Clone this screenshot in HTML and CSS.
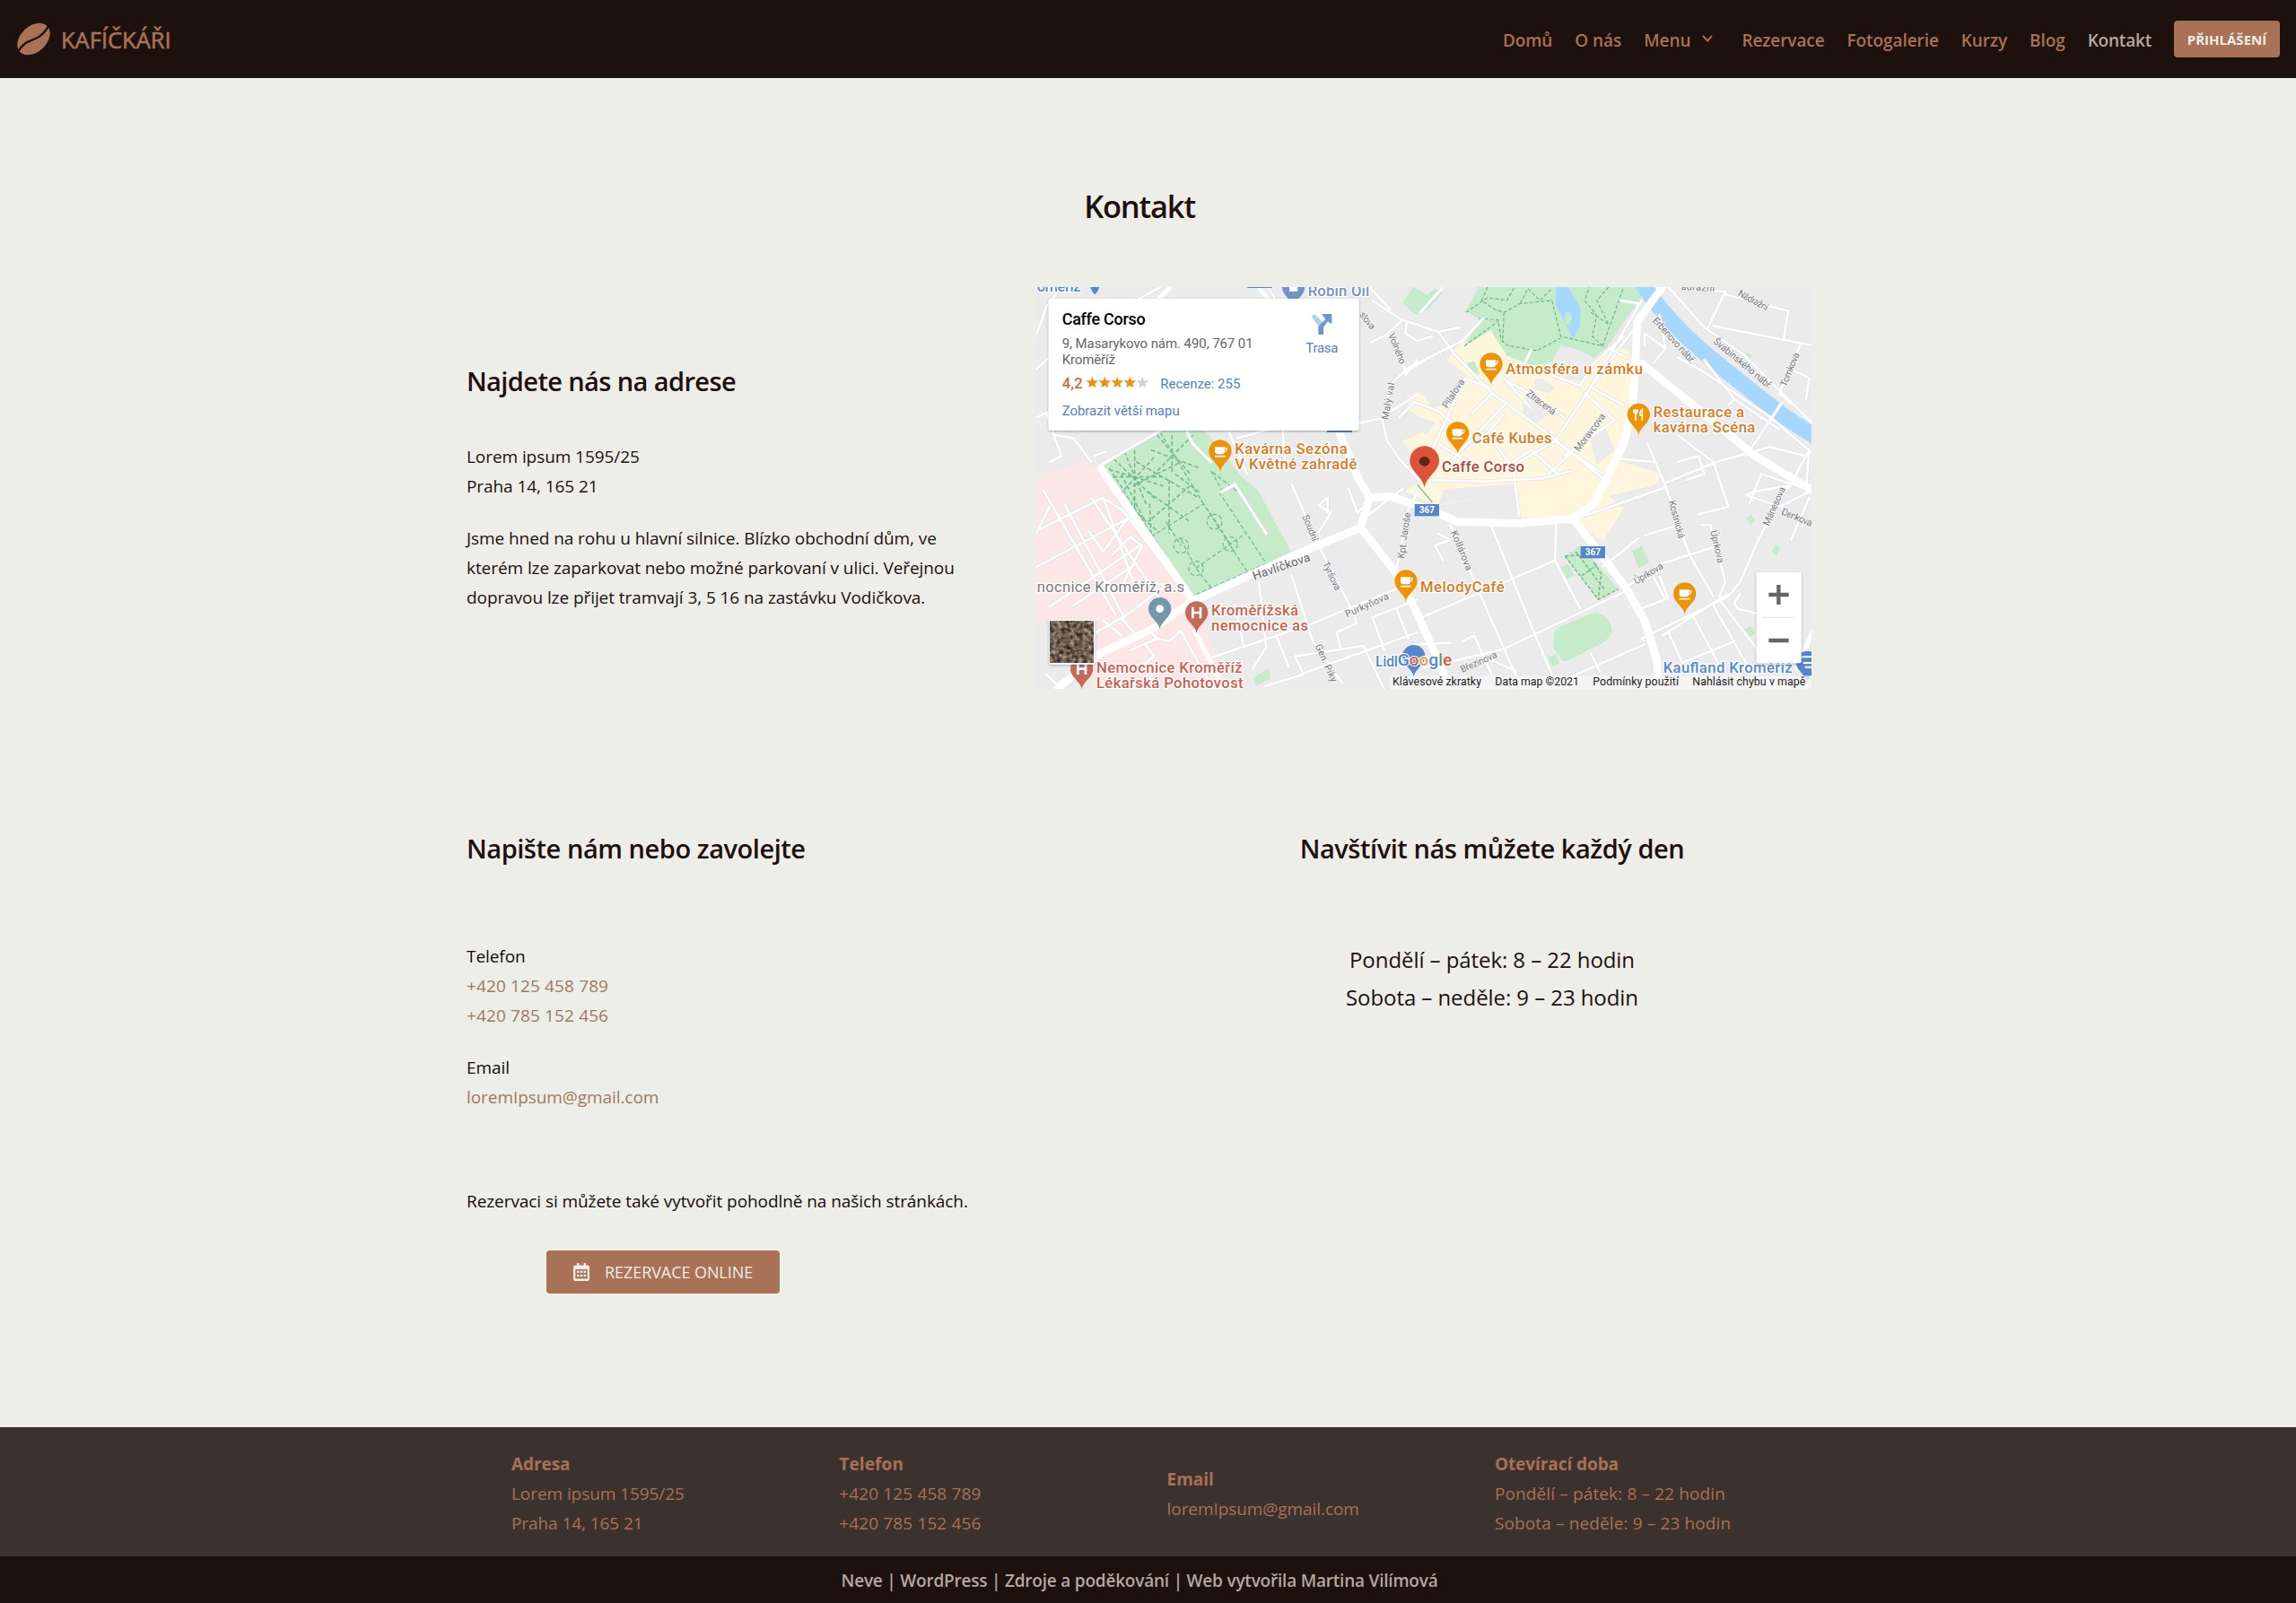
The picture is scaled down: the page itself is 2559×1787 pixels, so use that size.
FILE: index.html
```html
<!DOCTYPE html>
<html lang="cs">
<head>
<meta charset="utf-8">
<title>Kontakt – Kafíčkáři</title>
<link rel="stylesheet" href="styles.css">
</head>
<body>
<header class="header">
  <a class="brand">
    <svg class="brand-icon" viewBox="0 0 38 38"><ellipse cx="19" cy="19" rx="21.5" ry="14.8" transform="rotate(-43 19 19)" fill="#a97155"/><path d="M1 34C7 23 13 22 20 19C28 15.500 33 11 37 2" fill="none" stroke="#1c110d" stroke-width="2.400"/></svg>
    <span class="brand-name">KAFÍČKÁŘI</span>
  </a>
  <nav class="nav">
    <a>Domů</a><a>O nás</a>
    <a class="has-menu">Menu<svg class="chevron" viewBox="0 0 12 8"><path d="M1 1L6 6.500L11 1" fill="none" stroke="#a97155" stroke-width="1.900"/></svg></a>
    <a>Rezervace</a><a>Fotogalerie</a><a>Kurzy</a><a>Blog</a><a class="active">Kontakt</a>
    <a class="login">PŘIHLÁŠENÍ</a>
  </nav>
</header>

<main class="main">
  <h1 class="title">Kontakt</h1>
  <section class="place">
    <div class="place-text">
      <h2>Najdete nás na adrese</h2>
      <p>Lorem ipsum 1595/25<br>Praha 14, 165 21</p>
      <p>Jsme hned na rohu u hlavní silnice. Blízko obchodní dům, ve<br>kterém lze zaparkovat nebo možné parkovaní v ulici. Veřejnou<br>dopravou lze přijet tramvají 3, 5 16 na zastávku Vodičkova.</p>
    </div>
    <svg class="map" viewBox="16 15 2592 1344" preserveAspectRatio="none">
      <defs>
        <path id="drop" d="M0 68C-4 42-38 28-38 0A38 38 0 1 1 38 0C38 28 4 42 0 68Z"/>
        <g id="cafe"><use href="#drop" fill="#ef9206"/><path d="M-18-14H15V0Q15 10 5 10H-8Q-18 10-18 0Z" fill="#fff"/><path d="M14-10h7q3 9-9 12" fill="none" stroke="#fff" stroke-width="4"/><path d="M-18 17H17" stroke="#fff" stroke-width="5"/></g>
        <g id="hosp"><use href="#drop" fill="#c56a58"/><path d="M-13-19V19M13-19V19M-13 0H13" stroke="#fff" stroke-width="8" fill="none"/></g>
        <path id="star" d="M0-20L5-6L20-6L9 4L12 18L0 10L-12 18L-9 4L-20-6L-5-6Z"/>
        <filter id="ground" x="0" y="0" width="1" height="1" color-interpolation-filters="sRGB"><feTurbulence type="fractalNoise" baseFrequency=".07" numOctaves="4" seed="6"/><feColorMatrix values=".9 .3 0 0 -.17 .8 .3 0 0 -.18 .7 .3 0 0 -.18 0 0 0 0 1"/></filter>
        <filter id="shade" x="-.1" y="-.1" width="1.200" height="1.250"><feDropShadow dx="0" dy="3" stdDeviation="5" flood-opacity=".3"/></filter>
      </defs>
      <rect width="2640" height="1400" fill="#ebebec"/>

      <!-- districts, parks and water -->
      <path fill="#fde6e6" d="M0 652L185 596L238 640L550 1070L660 1360H200L215 1230V1140L18 1130Z"/>
      <path fill="#c5ebc8" d="M235 615L430 495H580L700 645L760 700L868 900L535 1058Z"/>
      <path fill="#c5ebc8" d="M1240 70L1275 15L1330 45L1290 110ZM740 1322L795 1290L800 1325L750 1350Z"/>
      <path fill="#fff6dd" d="M1255 385L1290 365L1320 385L1360 470L1300 450L1262 430ZM1240 530L1310 500L1360 560L1300 600Z"/>
      <g transform="translate(1290 0)">
        <path fill="#fff6dd" d="M140 205L245 160L315 240L400 300L545 330L640 215L705 225L720 300L700 480L655 590L815 640L800 675L640 715L690 755L620 865L540 810L340 785L325 705L70 745L-40 700L10 660L-10 560L60 470L10 430L90 410L165 310L100 260Z"/>
        <path fill="#ebebec" d="M350 390L395 370L440 440L400 470L355 450ZM580 530L625 480L660 560L600 610ZM390 325L420 320L460 350L440 370L395 360ZM90 690L325 675V712L210 722L70 742Z"/>
        <path fill="#c5ebc8" d="M205 15H775L720 90L635 215L590 252L540 225L480 210L450 265L385 278L300 245L245 160L158 212L205 120L162 95ZM165 270L190 262L210 310L165 290ZM10 60L60 20L85 35L30 95ZM1090 235L1120 240L1110 258L1085 250Z"/>
        <path fill="#a6d8ff" d="M465 15H505L545 85V145L520 188L492 130L462 75Z"/>
        <ellipse cx="504" cy="120" rx="12" ry="22" fill="#c5ebc8"/>
        <path fill="none" stroke="#68b586" stroke-width="3.500" stroke-dasharray="12 7" d="M235 15L215 60L260 90L290 100L345 70L450 60L480 180L620 212L690 15M205 120L270 125L280 190L300 210L400 228L480 185M162 100L235 50L300 60L325 15M620 212L585 180L600 110L560 60L575 15M580 100L640 140L600 60L640 15M290 100L285 200M158 212L270 130M345 70L370 20L410 60L450 20"/>
        <path fill="none" stroke="#a6d8ff" stroke-width="54" d="M750 0C830 125 925 210 1060 317S1230 455 1340 520"/>
      </g>
      <g transform="translate(1290 675)">
        <path fill="#c5ebc8" d="M494 240L545 203L672 350L605 385ZM718 222L750 206L775 260L740 280ZM480 275L505 268L524 305L500 318ZM455 505Q460 485 480 475L590 430Q645 435 650 490Q645 515 620 530L500 590Q480 595 475 575L455 545ZM440 580L465 565L475 600L450 610ZM1100 115L1115 102L1130 118L1115 135ZM1185 225L1198 203L1215 210L1200 238ZM1092 488L1115 475L1130 500L1105 514Z"/>
        <path fill="none" stroke="#68b586" stroke-width="4" stroke-dasharray="12 6" d="M494 240L605 385L672 350M530 225L625 350M550 305L600 270M590 260L615 300L605 380M494 240L560 235"/>
      </g>

      <!-- garden paths -->
      <g fill="none" stroke="#74bc90" stroke-width="4" stroke-dasharray="14 8">
        <path d="M260 620L535 1050L785 940L630 705M400 850L575 740L720 965M575 740L430 500M500 860L550 955L600 1020M550 955L665 875L715 840M665 875L610 790L575 740M450 800L500 880M640 700L600 630L690 700"/>
        <circle cx="665" cy="875" r="24"/><circle cx="550" cy="956" r="24"/><circle cx="500" cy="880" r="25"/><circle cx="612" cy="800" r="25"/>
        <path stroke-width="5" d="M345 560V750M250 650H450M275 590L420 730M410 585L285 720M310 565L385 745M260 625L440 680M470 510V640M400 560L560 620M420 510L530 640M540 510L410 640M390 700L530 800M530 680L390 800M460 660V840M340 760L420 830M300 640L380 800M350 600L560 720M340 680L500 600M480 640L560 700M395 740L400 850"/>
      </g>

      <!-- side streets: a grey edge below, white on top -->
      <g class="street-edge">
        <path id="net" d="M15 290L60 250M15 180L50 80L100 15M20 450L100 410L50 440L100 580L60 600M80 510L140 520L200 600M225 615L430 495M210 580L250 565M520 500L540 540L600 600M660 500L720 640M840 495L850 630M690 520L800 490M350 60L440 10M790 15L830 80M1095 470L1175 452M1290 375L1170 450L1190 530L1230 590L1300 665M1250 295L1200 340L1180 450M1140 60L1200 100L1240 125L1290 140L1340 160M1240 125L1185 175L1135 200M1185 175L1220 200L1250 300L1330 250L1400 215M1130 15L1200 90M1255 130L1250 170L1290 195L1340 180M1290 260L1250 310
          M40 695L280 1110M18 830L240 720L300 760M18 950L320 790M60 1085L360 880M60 750L15 840M140 1080L350 940M240 720L340 1000L440 1010M110 740L310 1120M200 720L430 1060M300 755L530 1060M190 830L240 900L320 790M270 910L330 850L370 880L300 1020M215 1170L320 1110L440 1020M240 1130L300 1180M300 1120L350 1180M330 1230L420 1190L460 1200L500 1165L540 1240L610 1360M380 1210L410 1250L370 1280M420 1190L390 1160M50 1310L90 1350
          M635 700L680 675L785 840M870 675L960 880L1080 1110L1085 1140L1020 1170L1035 1225M870 980L940 1200L1040 1340M960 835L985 795L1000 770L960 745L990 720L990 770M760 1000L785 1220L740 1290M680 1075L710 1220M820 1185L860 1285M600 1255L940 1140L1230 1020M880 1250L1110 1215L1160 1320L1180 1360M880 1250L910 1310L780 1350M900 1310L1290 1170M1060 690L1090 770L1110 750M1110 790L1240 690M1140 1120L1290 1060M1140 1120L1180 1230M1220 1090L1260 1190M1290 700L1260 760L1220 960"/>
        <g id="net-east" transform="translate(1290 0)">
          <path d="M0 140L70 165L125 240L250 370L430 500L620 655M-40 290L150 195L220 120M70 165L140 150M240 350L160 320L40 580L20 660L220 665L420 655L515 630M165 560L240 500L290 440M300 330L350 355L490 450M290 320L380 420M180 440L250 370M70 540L190 610M110 600L300 400M230 500L320 620L340 780M340 600L460 530L580 350L750 60M580 350L690 410M560 370L660 460L490 580M460 530L620 640M320 600L380 560L470 640M515 570L440 640M640 220L700 250M680 60L740 70M720 160L580 350M450 310L545 345L590 270L690 180M380 225L360 270M100 0L10 100M810 110L830 220L790 270M830 220L760 170L760 210M840 15L960 150L1090 240L1250 400L1320 470M970 155L1030 30L880 20M1030 40L1240 95L1225 190M990 145L1320 210M1280 210L1210 370L1250 405M1250 290L1310 320L1300 390M960 260L1060 390L1210 490M870 250L960 300L1180 450L1320 570M1060 390L1040 410M790 600L680 590M770 540L830 680M830 670L1000 600L1180 550L1300 580M870 510L990 600L1040 750L940 775M870 600L940 580L960 640L900 660M1220 400L1100 580M1110 740L1150 640L1300 690L1310 560L1240 690M-60 450L-10 400L70 430L130 480"/>
          <path d="M1240 680L1120 700L1100 710L1210 750L1310 700M560 780L830 685M620 950L740 855M760 845L860 815M830 680L910 910L990 1050M910 910L820 940L710 1010M910 910L1010 880M950 810L980 810L1030 1000L1010 1050M1240 680L1140 860L1080 1000L1040 1050L750 1190L760 1200M790 985L830 1060L750 1090M810 980L840 1060M465 800L460 930L15 1120M460 930L545 1090M250 820L390 1170L450 1310M110 810L200 1020L350 1360M20 1290L290 1225L700 1030M70 840L110 860L60 880L85 930M-10 1210L110 1205M150 1200L190 1180L270 1360M330 1300L220 1250M420 1360L760 1210M840 1170L890 1280M920 1110L1020 1300M990 1080L1120 1310M1010 1060L1170 1270M1080 1040L1060 1070L1070 1090L1150 1110M890 1270L1060 1200M820 1180L1040 1040M1250 860L1310 720M580 1240L610 1300"/>
        </g>
      </g>
      <g class="street"><use href="#net"/><use href="#net-east"/></g>
      <g class="road">
        <path d="M235 625L540 1065M540 1065L760 965L930 890L1100 820L1130 720L1090 650L1025 490M90 1355L230 1240L400 1160L540 1065M1130 720L1200 715L1360 770L1420 800L1630 805L1810 790L1880 740L1980 540L2010 420L2020 250L2025 130L2110 15M1100 820L1230 985L1300 1130L1380 1310M1810 790L1890 890L1990 1025L2050 1130L2090 1260L2100 1360M2040 270L2200 400L2420 580L2620 700"/>
        <path class="thin" d="M400 80L460 20M545 1165L610 1290L640 1360M760 15L810 80M2560 1290L2610 1170"/>
      </g>

      <!-- street names -->
      <g class="street-name">
        <text transform="translate(1095 108) rotate(52)" textLength="65">slova</text>
        <text transform="translate(1192 175) rotate(68)" textLength="108">Volného</text>
        <text transform="translate(1192 460) rotate(-80)" textLength="125">Malý val</text>
        <text transform="translate(1390 422) rotate(-57)" textLength="108">Pilařova</text>
        <text transform="translate(1652 375) rotate(37)" textLength="115">Ztracená</text>
        <text transform="translate(1830 567) rotate(-53)" textLength="150">Moravcova</text>
        <text transform="translate(2075 128) rotate(48)" textLength="195">Erbenovo nábř.</text>
        <text transform="translate(2278 200) rotate(40)" textLength="245">Švabinského nábř.</text>
        <text transform="translate(2172 24) rotate(3)" textLength="112">ádražní</text>
        <text transform="translate(2360 42) rotate(29)" textLength="110">Nádražní</text>
        <text transform="translate(2523 350) rotate(-68)" textLength="120">Tomkova</text>
        <text transform="translate(905 782) rotate(68)" textLength="92">Soudní</text>
        <text transform="translate(972 940) rotate(64)" textLength="102">Tyršova</text>
        <text transform="translate(948 1215) rotate(66)" textLength="135">Gen. Píky</text>
        <text transform="translate(1055 1120) rotate(-24)" textLength="155">Purkyňova</text>
        <text transform="translate(1246 924) rotate(-82)" textLength="155">Kpt. Jaroše</text>
        <text transform="translate(1402 835) rotate(68)" textLength="140">Kollárova</text>
        <text transform="translate(1440 1305) rotate(-24)" textLength="130">Březinova</text>
        <text transform="translate(2130 732) rotate(75)" textLength="130">Kostnická</text>
        <text transform="translate(2270 832) rotate(77)" textLength="110">Úprkova</text>
        <text transform="translate(2022 1010) rotate(-31)" textLength="108">Úprkova</text>
        <text transform="translate(2465 815) rotate(-66)" textLength="138">Mánesova</text>
        <text transform="translate(2505 775) rotate(22)" textLength="108">Denkova</text>
        <text class="main-name" transform="translate(745 995) rotate(-19)" textLength="200">Havlíčkova</text>
      </g>
      <g class="shield"><rect x="722" y="5" width="82" height="13"/><rect x="988" y="480" width="84" height="21"/><rect x="1281" y="741" width="82" height="40"/><text x="1322" y="772">367</text><rect x="1836" y="882" width="82" height="40"/><text x="1877" y="913">367</text></g>

      <!-- places -->
      <use href="#cafe" x="631" y="564"/><use href="#cafe" x="1537" y="273"/><use href="#cafe" x="1425" y="504"/><use href="#cafe" x="1252" y="999"/><use href="#cafe" x="2184" y="1041"/>
      <g transform="translate(2030 442)"><use href="#drop" fill="#ef9206"/><path d="M-16-18V-8Q-10 2-4-8V-18M-10-18V20M12 20V-18Q2-10 6 2H12" fill="none" stroke="#fff" stroke-width="5"/></g>
      <g class="poi orange">
        <text x="680" y="572" textLength="376">Kavárna Sezóna</text><text x="680" y="625" textLength="408">V Květné zahradě</text>
        <text x="1586" y="307" textLength="458">Atmosféra u zámku</text><text x="1473" y="537" textLength="267">Café Kubes</text>
        <text x="2079" y="450" textLength="304">Restaurace a</text><text x="2079" y="502" textLength="341">kavárna Scéna</text>
        <text x="1300" y="1034" textLength="281">MelodyCafé</text>
      </g>
      <use href="#hosp" x="552" y="1104"/><use href="#hosp" x="168" y="1292"/>
      <g class="poi red">
        <text x="601" y="1112" textLength="291">Kroměřížská</text><text x="601" y="1165" textLength="324">nemocnice as</text>
        <text x="217" y="1304" textLength="488">Nemocnice Kroměříž</text><text x="217" y="1357" textLength="491">Lékařská Pohotovost</text>
      </g>
      <use href="#drop" fill="#7696ab" x="429" y="1091"/><circle cx="429" cy="1091" r="13" fill="#fff"/>
      <text class="poi grey" x="18" y="1035" textLength="493">nocnice Kroměříž, a.s</text>
      <path d="M1290 675L1340 735" stroke="#7cc196" stroke-width="4"/>
      <path d="M1314 687C1310 650 1265 630 1265 596A49 49 0 0 1 1363 596C1363 630 1318 650 1314 687Z" fill="#de5237"/><ellipse cx="1314" cy="598" rx="18" ry="16" fill="#59281a"/>
      <text class="poi corso" x="1372" y="632" textLength="276">Caffe Corso</text>
      <g class="poi blue">
        <text x="18" y="31" textLength="147">oměříž</text><path d="M194 5Q200 32 213 40Q226 25 230 5Z"/>
        <use href="#drop" x="876" y="16" class="slate"/><path d="M862 8H890V30H862Z" class="white"/>
        <text x="924" y="46" textLength="206" class="slate">Robin Oil</text>
        <use href="#drop" x="1278" y="1250"/>
        <text x="1150" y="1284" textLength="75">Lidl</text>
        <text x="2112" y="1304" textLength="432">Kaufland Kroměříž</text><use href="#drop" x="2594" y="1270"/><path d="M2576 1252H2610M2580 1272H2610M2586 1286H2610" stroke="#fff" stroke-width="6"/>
      </g>
      <text class="google" x="1224" y="1282" textLength="182" lengthAdjust="spacingAndGlyphs"><tspan fill="#4b86e0">G</tspan><tspan fill="#d9553f">o</tspan><tspan fill="#e8a33d">o</tspan><tspan fill="#4b86e0">g</tspan><tspan fill="#5aa567">l</tspan><tspan fill="#d9553f">e</tspan></text>

      <!-- controls -->
      <g filter="url(#shade)"><rect x="58" y="1127" width="154" height="150" rx="5" fill="#fff"/></g>
      <rect x="63" y="1132" width="144" height="140" filter="url(#ground)"/>
      <g filter="url(#shade)"><rect x="2424" y="969" width="150" height="304" rx="6" fill="#fff"/></g>
      <path d="M2465 1044H2532M2498 1011V1077M2465 1197H2532" stroke="#666" stroke-width="13"/><path d="M2443 1120H2552" stroke="#e2e2e2" stroke-width="3"/>
      <rect x="1198" y="1315" width="1412" height="45" fill="#f5f5f5" opacity=".82"/>
      <g class="legal"><text x="1207" y="1347" textLength="297">Klávesové zkratky</text><text x="1550" y="1347" textLength="281">Data map ©2021</text><text x="1877" y="1347" textLength="287">Podmínky použití</text><text x="2210" y="1347" textLength="378">Nahlásit chybu v mapě</text></g>

      <!-- place card -->
      <g filter="url(#shade)"><rect x="57" y="54" width="1038" height="441" rx="7" fill="#fff"/></g>
      <g class="card">
        <text class="card-title" x="102" y="140" textLength="279">Caffe Corso</text>
        <text x="102" y="220" textLength="639">9, Masarykovo nám. 490, 767 01</text><text x="102" y="274" textLength="178">Kroměříž</text>
        <text class="score" x="102" y="353" textLength="69">4,2</text>
        <g fill="#ee900a"><use href="#star" x="203" y="334"/><use href="#star" x="245" y="334"/><use href="#star" x="287" y="334"/><use href="#star" x="329" y="334"/></g><use href="#star" x="371" y="334" fill="#ced4ce"/>
        <text class="link" x="431" y="354" textLength="267">Recenze: 255</text><text class="link" x="102" y="444" textLength="393">Zobrazit větší mapu</text>
        <text class="link" x="917" y="234" textLength="108">Trasa</text>
        <path d="M936 114L946 105L976 135L962 148Z" fill="#a9d3f5"/><path d="M959 174V147L983 123L970 105H1004V138L990 130L976 150V174Z" fill="#6c94cf"/>
      </g>
    </svg>
  </section>

  <section class="info">
    <div class="contact">
      <h2>Napište nám nebo zavolejte</h2>
      <p>Telefon<br><a class="digits">+420 125 458 789</a><br><a class="digits">+420 785 152 456</a></p>
      <p>Email<br><a>loremIpsum@gmail.com</a></p>
      <p class="booking">Rezervaci si můžete také vytvořit pohodlně na našich stránkách.</p>
      <a class="button"><svg viewBox="0 0 18 20"><path fill="#eeeee8" fill-rule="evenodd" d="M4 0H6.500V2.500H11.500V0H14V2.500H16Q18 2.500 18 4.500V18Q18 20 16 20H2Q0 20 0 18V4.500Q0 2.500 2 2.500H4ZM2.300 7V17.500H15.700V7ZM4 8.500H6.500V11H4ZM7.800 8.500H10.300V11H7.800ZM11.600 8.500H14.100V11H11.600ZM4 12.800H6.500V15.300H4ZM7.800 12.800H10.300V15.300H7.800ZM11.600 12.800H14.100V15.300H11.600Z"/></svg>REZERVACE ONLINE</a>
    </div>
    <div class="hours">
      <h2>Navštívit nás můžete každý den</h2>
      <p>Pondělí – pátek: 8 – 22 hodin<br>Sobota – neděle: 9 – 23 hodin</p>
    </div>
  </section>
</main>

<footer>
  <div class="footer-columns">
    <p><b>Adresa</b><br>Lorem ipsum 1595/25<br>Praha 14, 165 21</p>
    <p class="digits"><b>Telefon</b><br>+420 125 458 789<br>+420 785 152 456</p>
    <p><b>Email</b><br>loremIpsum@gmail.com</p>
    <p><b>Otevírací doba</b><br><span class="digits">Pondělí – pátek: 8 – 22 hodin<br>Sobota – neděle: 9 – 23 hodin</span></p>
  </div>
  <div class="credits">Neve | WordPress | Zdroje a poděkování | Web vytvořila Martina Vilímová</div>
</footer>
</body>
</html>
```
FILE: styles.css
```css
* { box-sizing: border-box; }
body {
  margin: 0;
  min-height: 1787px;
  display: flex;
  flex-direction: column;
  background: #edeee8;
  color: #1c110d;
  font: 400 19px/33px "Open Sans", "Noto Sans", sans-serif;
  letter-spacing: -.07px;
}
h1, h2, p { margin: 0; }
.digits { letter-spacing: .13px; }

.header {
  height: 87px;
  padding: 0 18px 0 19px;
  display: flex;
  align-items: center;
  justify-content: space-between;
  background: #1c110d;
  color: #a97155;
}
.brand { display: flex; align-items: center; gap: 12px; }
.brand-icon { width: 37px; height: 37px; }
.brand-name {
  font-size: 25.5px;
  font-weight: 500;
  letter-spacing: 0;
  padding-top: 2px;
  -webkit-text-stroke: .6px #a97155;
}
.nav {
  display: flex;
  align-items: center;
  gap: 25px;
  font-weight: 600;
  letter-spacing: -.08px;
}
.nav a { padding-top: 3px; }
.has-menu { display: flex; align-items: center; }
.chevron { width: 12px; height: 8px; margin: -4px 7px 0 13px; }
.nav .active { color: #b5a8a0; letter-spacing: -.2px; }
.nav .login {
  width: 118px;
  height: 41px;
  padding: 0;
  border-radius: 4px;
  background: #a97155;
  color: #edeee8;
  font-size: 15px;
  font-weight: 700;
  line-height: 42px;
  text-align: center;
  letter-spacing: 0;
}

.main {
  width: 1519px;
  height: 1504px;
  margin: 0 auto;
  padding: 120px 19px 0 0;
}
.title {
  font-size: 34.5px;
  font-weight: 600;
  line-height: 45px;
  letter-spacing: -1.2px;
  text-align: center;
}
h2 {
  font-size: 29px;
  font-weight: 600;
  line-height: 40px;
  letter-spacing: -.45px;
}
.place {
  margin-top: 68px;
  padding-right: 1px;
  display: flex;
  align-items: center;
  justify-content: space-between;
}
.place-text h2 { margin-bottom: 48px; letter-spacing: -.6px; }
.place-text p + p { margin-top: 25px; }
.map { display: block; width: 864px; height: 448px; font-family: Roboto, sans-serif; letter-spacing: 0; }

.info { margin-top: 158px; display: flex; justify-content: space-between; }
.info h2 { margin-bottom: 84px; }
.contact p { margin-bottom: 25px; color: #140d0a; }
.contact p a { color: #a07860; }
.contact .booking { margin: 83px 0 38px; }
.button {
  width: 260px;
  height: 48px;
  margin-left: 89px;
  padding-left: 30px;
  display: flex;
  align-items: center;
  gap: 17px;
  border-radius: 4px;
  background: #a97155;
  color: #edeee8;
  font-size: 18px;
}
.button svg { width: 18px; height: 20px; }
.hours { width: 714px; text-align: center; }
.hours h2 { margin-bottom: 83px; }
.hours p { font-size: 24px; line-height: 42px; }

.footer-columns {
  height: 144px;
  padding: 5px 0 0 570px;
  display: grid;
  grid-template-columns: repeat(4, 365.3px);
  align-items: center;
  background: #3c322d;
  color: #a97155;
}
.credits {
  height: 52px;
  padding-right: 19px;
  background: #1c110d;
  color: #b5a8a0;
  font-weight: 600;
  line-height: 54px;
  letter-spacing: -.21px;
  text-align: center;
}

.street, .street-edge, .road { fill: none; stroke-linejoin: round; stroke-linecap: round; }
.street-edge { stroke: #dfe1e4; stroke-width: 12; }
.street { stroke: #fff; stroke-width: 8; }
.road { stroke: #fff; stroke-width: 26; }
.road .thin { stroke-width: 15; }
.street-name { fill: #77797c; font-size: 32px; paint-order: stroke; stroke: #f4f4f4; stroke-width: 6px; }
.street-name .main-name { font-size: 40px; fill: #626466; }
.shield { fill: #5585cb; }
.shield text { fill: #fff; font-size: 30px; font-weight: 700; text-anchor: middle; }
.poi { font-size: 50px; font-weight: 500; }
.poi text, text.poi { paint-order: stroke; stroke: #fff; stroke-width: 8px; stroke-linejoin: round; }
.orange { fill: #d97a1c; }
.red { fill: #cb5f4c; }
.grey { fill: #77797d; font-weight: 400; }
.corso { fill: #b3453a; }
.blue { fill: #5288d0; }
.blue .slate { fill: #7093c8; }
.blue .white { fill: #fff; }
.google { font-size: 56px; font-weight: 500; paint-order: stroke; stroke: #fff; stroke-width: 6px; }
.legal { font-size: 37px; fill: #222; }
.card { font-size: 45px; fill: #666; }
.card .card-title { font-size: 54px; font-weight: 500; fill: #000; }
.card .score { font-size: 50px; fill: #d06a1d; font-weight: 500; }
.card .link { fill: #4f82c4; }
```
